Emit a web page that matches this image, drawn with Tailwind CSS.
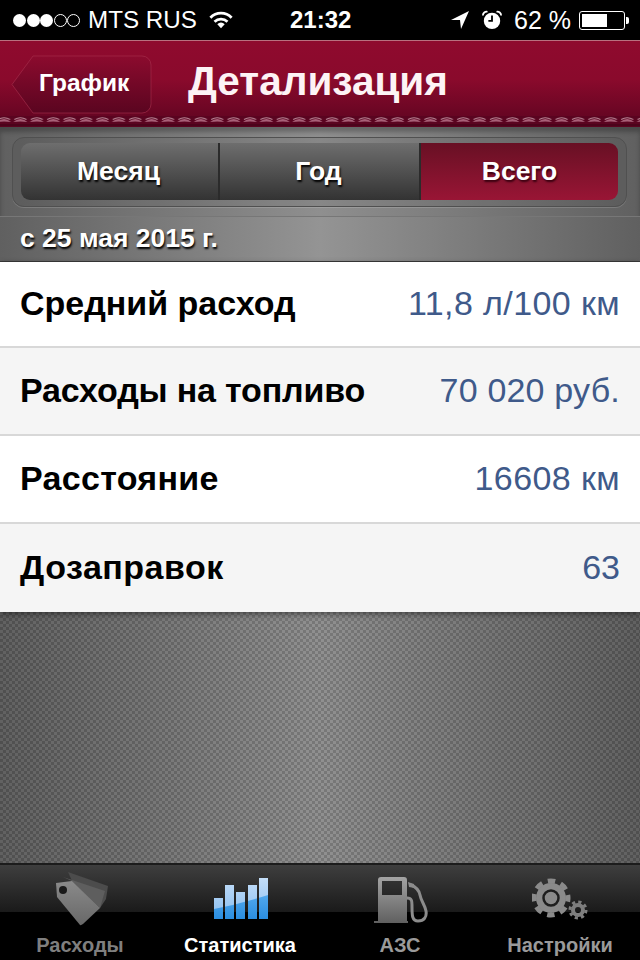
<!DOCTYPE html>
<html>
  <head>
    <meta charset="utf-8" />
    <title>Детализация</title>
    <script src="https://cdn.jsdelivr.net/npm/@tailwindcss/browser@4"></script>
  </head>
  <body class="bg-black font-['Liberation_Sans',sans-serif]">
    <div class="w-[640px] h-[960px] flex flex-col overflow-hidden">

      <!-- Status bar -->
      <div class="h-[40px] bg-black text-white flex items-center pl-[13px]">
        <div class="flex items-center gap-[0.5px]">
          <span class="w-[13px] h-[13px] rounded-full bg-white"></span>
          <span class="w-[13px] h-[13px] rounded-full bg-white"></span>
          <span class="w-[13px] h-[13px] rounded-full bg-white"></span>
          <span class="w-[13px] h-[13px] rounded-full border border-white"></span>
          <span class="w-[13px] h-[13px] rounded-full border border-white"></span>
        </div>
        <span class="ml-[8px] text-[24.2px] leading-none w-[121px] flex-none">MTS RUS</span>
        <svg class="flex-none" width="24" height="20" viewBox="0 0 26 20" fill="none" stroke="#fff" stroke-width="3">
          <path d="M1.5 7.5a16 16 0 0 1 23 0" />
          <path d="M6 12a10 10 0 0 1 14 0" />
          <path d="M13 19l-4-4.5a5.500 5.500 0 0 1 8 0z" fill="#fff" stroke="none" />
        </svg>
        <span class="ml-[57px] w-[62px] flex-none text-[24px] font-bold leading-none">21:32</span>
        <svg class="ml-[99px] flex-none" width="18" height="18" viewBox="0 0 18 18"><path d="M0 9L18 0l-8 18-1-9z" fill="#fff" /></svg>
        <svg class="ml-[13px] flex-none" width="20" height="20" viewBox="0 0 22 22">
          <circle cx="11" cy="12" r="9" fill="#fff" />
          <path d="M11 6v6H7" fill="none" stroke="#000" stroke-width="2" />
          <path d="M1 6a4 4 0 0 1 5-4M21 6a4 4 0 0 0-5-4" fill="none" stroke="#fff" stroke-width="2" />
        </svg>
        <span class="ml-[12px] w-[65px] flex-none text-[25px] leading-none">62 %</span>
        <div class="w-[46px] h-[19px] border border-white rounded-[3px] p-[2px] flex-none">
          <div class="w-[25px] h-full bg-white"></div>
        </div>
        <span class="w-[3px] h-[7px] bg-white rounded-r-[2px] ml-[1px] flex-none"></span>
      </div>

      <!-- Navigation bar -->
      <div class="h-[87px] flex-none relative border-t border-[#b9707f] bg-[linear-gradient(#8f0a2e,#8a0a2c_45%,#5c0420)]">
        <div class="absolute left-[11px] top-[14px]">
          <svg width="141" height="59" viewBox="0 0 141 59">
            <defs>
              <linearGradient id="backFill" x1="0" y1="0" x2="0" y2="1">
                <stop offset="0" stop-color="#8c0b2e" />
                <stop offset="1" stop-color="#5a0520" />
              </linearGradient>
            </defs>
            <path d="M1 29.500L22 1h109a9 9 0 0 1 9 9v39a9 9 0 0 1-9 9H22z" fill="url(#backFill)" stroke="#a8304f" stroke-opacity=".6" />
          </svg>
        </div>
        <span class="absolute left-[39px] top-[27px] text-[24.5px] leading-[30px] font-bold text-white">График</span>
        <span class="absolute left-[188px] top-[18px] text-[40.500px] leading-[44px] font-bold text-[#fdf3f5]">Детализация</span>
        <!-- stitching -->
        <svg class="absolute left-0 bottom-0" width="640" height="11">
          <defs>
            <pattern id="stitch" x="-4" y="0" width="16.400" height="11" patternUnits="userSpaceOnUse">
              <path d="M0 0h16.400v11H0z" fill="#5a0420" />
              <path d="M1 6q7-6 14 0q-7-1-14 0z" fill="#a86078" />
              <path d="M2 3.500q6-3.500 12 0" fill="none" stroke="#b98595" stroke-width="1" />
              <path d="M0 9h16.400" stroke="#3e0216" stroke-width="1" />
            </pattern>
          </defs>
          <rect width="640" height="11" fill="url(#stitch)" />
        </svg>
      </div>

      <!-- Segmented control -->
      <div class="h-[90px] flex-none border-b border-[#777] bg-[linear-gradient(90deg,#606060,#8f8f8f_50%,#606060)] pt-[10px] pl-[12px] shadow-[inset_0_5px_4px_rgba(0,0,0,.25)]">
        <div class="w-[615px] h-[70px] rounded-[12px] border border-[#505050] pt-[5px] pl-[8px] bg-black/5 shadow-[0_1px_0_rgba(255,255,255,.15)]">
          <div class="w-[597px] h-[57px] flex rounded-[9px] overflow-hidden text-[26.500px] font-bold text-white [text-shadow:1px_2px_2px_#000]">
            <div class="w-[199px] flex items-center justify-center pr-[2px] border-r-2 border-[#2b2b2b] bg-[linear-gradient(#6e6e6e,#333)]">Месяц</div>
            <div class="w-[201px] flex items-center justify-center pr-[2px] border-r-2 border-[#2b2b2b] bg-[linear-gradient(#6e6e6e,#333)]">Год</div>
            <div class="flex-1 flex items-center justify-center bg-[linear-gradient(#681024,#991535)] [text-shadow:1px_2px_2px_#3a0010]">Всего</div>
          </div>
        </div>
      </div>

      <!-- Date strip -->
      <div class="h-[45px] flex-none border-b border-[#3a3a3a] bg-[linear-gradient(90deg,#606060,#949494_50%,#606060)] flex items-center pl-[20px] text-[26.500px] font-bold text-white [text-shadow:1px_2px_2px_#000]">с 25 мая 2015 г.</div>

      <!-- Detail rows -->
      <div class="relative flex-none flex flex-col text-[34px] shadow-[0_2px_6px_rgba(0,0,0,.45)]">
        <div class="h-[86px] bg-white border-b-2 border-[#d8d8d8] flex items-center justify-between px-[20px] pb-[2px]">
          <span class="font-bold text-black">Средний расход</span>
          <span class="text-[#3f5a8a] tracking-[0.4px]">11,8 л/100 км</span>
        </div>
        <div class="h-[88px] bg-[#f5f5f5] border-b-2 border-[#d8d8d8] flex items-center justify-between px-[20px] pb-[2px]">
          <span class="font-bold text-black tracking-[-0.17px]">Расходы на топливо</span>
          <span class="text-[#3f5a8a] tracking-[0.2px]">70 020 руб.</span>
        </div>
        <div class="h-[88px] bg-white border-b-2 border-[#d8d8d8] flex items-center justify-between px-[20px] pb-[2px]">
          <span class="font-bold text-black tracking-[0.3px]">Расстояние</span>
          <span class="text-[#3f5a8a] tracking-[0.4px]">16608 км</span>
        </div>
        <div class="h-[88px] bg-[#f5f5f5] flex items-center justify-between px-[20px] pb-[2px]">
          <span class="font-bold text-black tracking-[0.5px]">Дозаправок</span>
          <span class="text-[#3f5a8a]">63</span>
        </div>
      </div>

      <!-- Carbon background -->
      <div class="flex-1 bg-[repeating-conic-gradient(rgba(0,0,0,.14)_0_25%,rgba(255,255,255,.03)_0_50%),linear-gradient(90deg,#5c5c5c,#8c8c8c_50%,#5c5c5c)] bg-[size:6px_6px,100%_100%]"></div>

      <!-- Tab bar -->
      <div class="h-[97px] flex-none relative border-t-2 border-[#1c1c1c] bg-black grid grid-cols-4 text-[20px] font-bold text-center">
        <div class="absolute inset-x-0 top-0 h-[47px] bg-[linear-gradient(#3e3e3e,#1a1a1a)]"></div>

        <div class="relative flex flex-col items-center text-[#7f7f7f]">
          <svg class="mt-[7px] ml-[3px]" width="54" height="54" viewBox="0 0 54 54">
            <defs>
              <linearGradient id="tabGrey" x1="0" y1="0" x2="0" y2="1">
                <stop offset="0" stop-color="#a4a4a4" />
                <stop offset="1" stop-color="#606060" />
              </linearGradient>
              <linearGradient id="tagFront" x1="0" y1="0" x2="0" y2="1">
                <stop offset="0" stop-color="#8a8a8a" />
                <stop offset="1" stop-color="#686868" />
              </linearGradient>
            </defs>
            <path d="M13 0L53 14l-2 13-6 9L17 9z" fill="#4c4c4c" />
            <path d="M8 5l42 14-5 17L17 9z" fill="#5e5e5e" />
            <path d="M1 11l16-2 28 27-17 16q-2 1.500-3 1L2 25z" fill="url(#tagFront)" />
            <circle cx="8" cy="18" r="4" fill="#1a1a1a" />
          </svg>
          <span class="mt-auto mb-[4px] leading-[22px]">Расходы</span>
        </div>

        <div class="relative flex flex-col items-center text-white">
          <svg class="mt-[13px] ml-[2px]" width="54" height="41" viewBox="0 0 54 41">
            <defs>
              <linearGradient id="barTop" x1="0" y1="0" x2="0" y2="1">
                <stop offset="0" stop-color="#c4def8" />
                <stop offset="1" stop-color="#86bcf0" />
              </linearGradient>
              <linearGradient id="barLow" x1="0" y1="0" x2="0" y2="1">
                <stop offset="0" stop-color="#52a8ec" />
                <stop offset="1" stop-color="#2a8de0" />
              </linearGradient>
              <clipPath id="barClip">
                <rect x="0" y="20" width="9" height="21" />
                <rect x="11" y="7" width="9" height="34" />
                <rect x="22" y="14" width="9" height="27" />
                <rect x="34" y="7" width="9" height="34" />
                <rect x="45" y="0" width="9" height="41" />
              </clipPath>
            </defs>
            <g clip-path="url(#barClip)">
              <rect width="54" height="41" fill="url(#barTop)" />
              <path d="M0 31Q26 26 54 17V41H0z" fill="url(#barLow)" />
            </g>
          </svg>
          <span class="mt-auto mb-[4px] leading-[22px]">Статистика</span>
        </div>

        <div class="relative flex flex-col items-center text-[#9a9a9a]">
          <svg class="mt-[12px] ml-[2px]" width="54" height="46" viewBox="0 0 54 46">
            <path d="M4 3q0-3 3-3h23q3 0 3 3v41h1v2H0v-2h4zM8 4v14h20V4z" fill="url(#tabGrey)" fill-rule="evenodd" />
            <path d="M33 21c5 0 5 3 5 9 0 8 0 14 6 14s9-4 8-10c-1-6-5-10-6-16-1-5-4-8-9-10" fill="none" stroke="#8c8c8c" stroke-width="3" />
            <path d="M34 5l6 2 1 4-6-1z" fill="#8c8c8c" />
          </svg>
          <span class="mt-auto mb-[4px] leading-[22px]">АЗС</span>
        </div>

        <div class="relative flex flex-col items-center text-[#9a9a9a]">
          <svg class="mt-[13px]" width="56" height="42" viewBox="0 0 56 42">
            <g fill="none">
              <circle cx="19" cy="20" r="15" fill="#8a8a8a" />
              <circle cx="19" cy="20" r="17" stroke="#8a8a8a" stroke-width="5" stroke-dasharray="7.500 5.850" stroke-dashoffset="3.750" />
              <circle cx="19" cy="20" r="7.500" stroke="#1e1e1e" stroke-width="2.500" />
              <circle cx="46" cy="32" r="5" stroke="#7e7e7e" stroke-width="4" />
              <circle cx="46" cy="32" r="8" stroke="#7e7e7e" stroke-width="3" stroke-dasharray="3.200 3.080" />
            </g>
          </svg>
          <span class="mt-auto mb-[4px] leading-[22px]">Настройки</span>
        </div>
      </div>
    </div>
  </body>
</html>
